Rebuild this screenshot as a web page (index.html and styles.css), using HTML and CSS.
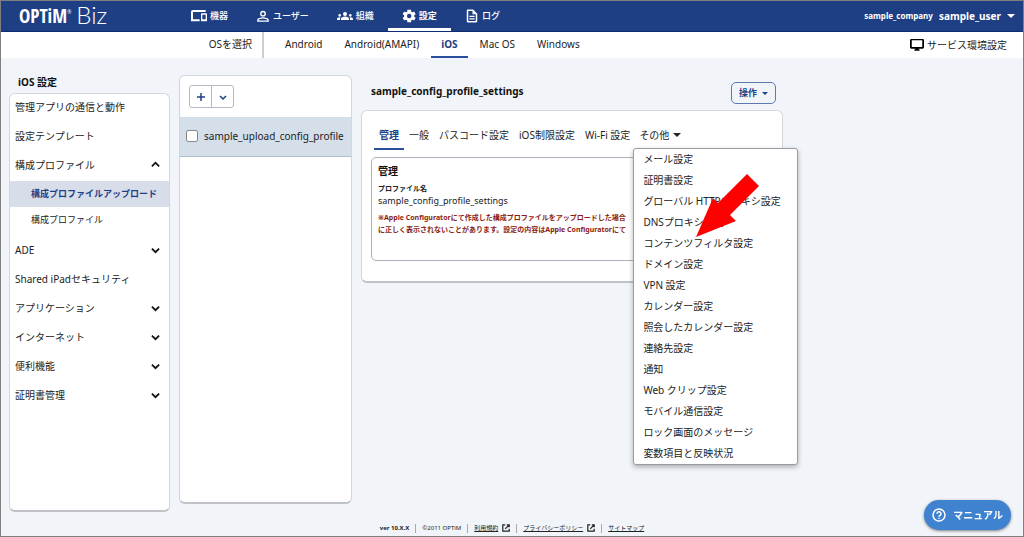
FILE: index.html
```html
<!DOCTYPE html>
<html lang="ja">

<head>
    <meta charset="UTF-8">
    <meta name="viewport" content="width=device-width, initial-scale=1.0">
    <title>OPTiM Biz</title>
    <link rel="stylesheet" href="styles.css">
</head>

<body>
    <header class="header">
        <a class="logo" href="#"><span class="logo-optim">OPTiM</span><span class="logo-mark">®</span><span class="logo-biz">Biz</span></a>
        <nav class="nav">
            <a class="nav-item" href="#">
                <svg class="icon-wide" viewBox="0 0 24 24"><path d="M3 6h19V3H3c-1.700 0-3 1.300-3 3v11H0v3h13v-3H3V6zm20 2h-7c-.6 0-1 .4-1 1v10c0 .6.400 1 1 1h7c.6 0 1-.4 1-1V9c0-.6-.4-1-1-1zm-1 9h-5v-7h5v7z"/></svg>
                機器
            </a>
            <a class="nav-item" href="#">
                <svg class="icon" viewBox="0 0 24 24"><path d="M12 3a5 5 0 1 0 0 10 5 5 0 0 0 0-10zm0 2.400a2.600 2.600 0 1 1 0 5.200 2.600 2.600 0 0 1 0-5.200zM12 14c-3.300 0-10 1.500-10 5v3h20v-3c0-3.500-6.700-5-10-5zm7.600 5.700H4.400V19c0-1.100 4-2.600 7.600-2.600s7.600 1.500 7.600 2.600z"/></svg>
                ユーザー
            </a>
            <a class="nav-item" href="#">
                <svg class="icon-wide" viewBox="0 0 24 24"><path d="M12 12.800c1.600 0 3.100.4 4.200.9 1.100.5 1.800 1.600 1.800 2.700V18H6v-1.600c0-1.200.7-2.200 1.800-2.700 1.200-.5 2.600-.9 4.200-.9zM4 13a2 2 0 1 0 0-4 2 2 0 0 0 0 4zm1.100 1.100A7 7 0 0 0 1.200 14.600 2 2 0 0 0 0 16.400V18h4.500v-1.600c0-.8.2-1.600.6-2.300zM20 13a2 2 0 1 0 0-4 2 2 0 0 0 0 4zm4 3.400a2 2 0 0 0-1.200-1.800 7 7 0 0 0-3.900-.5c.4.700.6 1.500.6 2.300V18H24zM12 6a3 3 0 1 1 0 6 3 3 0 0 1 0-6z"/></svg>
                組織
            </a>
            <a class="nav-item nav-active" href="#">
                <svg class="icon" viewBox="0 0 24 24"><path d="M21 13.100c.1-.7.100-1.500 0-2.200l2.200-1.700c.2-.2.300-.4.100-.7l-2.200-3.700c-.1-.2-.4-.3-.6-.2l-2.700 1a8 8 0 0 0-1.900-1.100L15.500 1.700c0-.3-.2-.4-.5-.4H9.700c-.3 0-.5.100-.5.400l-.4 2.800A8 8 0 0 0 6.900 5.600l-2.700-1c-.3-.1-.5 0-.6.200L1.200 8.500c-.1.300 0 .5.200.7l2.200 1.700c-.1.700-.1 1.500 0 2.200l-2.200 1.700c-.2.200-.3.400-.2.700l2.400 3.700c.1.200.3.300.6.200l2.700-1c.6.400 1.200.8 1.900 1.100l.4 2.800c0 .3.200.4.500.4H15c.3 0 .5-.1.500-.4l.4-2.800c.7-.3 1.300-.7 1.900-1.100l2.700 1c.2.100.5 0 .6-.2l2.200-3.700c.2-.3.100-.5-.1-.7zM12.300 15.800a3.800 3.800 0 1 1 0-7.600 3.800 3.800 0 0 1 0 7.600z"/></svg>
                設定
            </a>
            <a class="nav-item" href="#">
                <svg class="icon" viewBox="0 0 24 24"><path d="M5 1c-1.200 0-2 .9-2 2v18c0 1.100.9 2 2 2h14c1.100 0 2-.9 2-2V8l-7-7zm.6 2.500h7.200V9h5.600v11.500H5.600zM7.500 11.500v2.200h9v-2.200zm0 4.500v2.200h9V16z"/></svg>
                ログ
            </a>
        </nav>
        <button class="account" type="button">
            <span class="company">sample_company</span>
            <span>sample_user</span>
            <span class="caret"></span>
        </button>
    </header>

    <div class="subnav">
        <span class="os-label">OSを選択</span>
        <nav class="os-list">
            <a href="#">Android</a>
            <a href="#">Android(AMAPI)</a>
            <a class="os-active" href="#">iOS</a>
            <a href="#">Mac OS</a>
            <a href="#">Windows</a>
        </nav>
        <a class="service" href="#">
            <svg viewBox="0 0 16 14"><path d="M1.500 0h13A1.500 1.500 0 0 1 16 1.500v8a1.500 1.500 0 0 1-1.500 1.500H10v1h1v1.500H5V12h1v-1H1.500A1.500 1.500 0 0 1 0 9.500v-8A1.500 1.500 0 0 1 1.500 0zM2 1.500V9h12V1.500z"/></svg>
            サービス環境設定
        </a>
    </div>

    <main class="main">
        <section class="side">
            <h1 class="side-title">iOS 設定</h1>
            <ul class="side-menu card">
                <li><a href="#">管理アプリの通信と動作</a></li>
                <li><a href="#">設定テンプレート</a></li>
                <li>
                    <a href="#">構成プロファイル<svg class="chevron" viewBox="0 0 10 10"><path d="M1 7l4-4 4 4"/></svg></a>
                    <ul class="side-sub">
                        <li><a class="sub-active" href="#">構成プロファイルアップロード</a></li>
                        <li><a href="#">構成プロファイル</a></li>
                    </ul>
                </li>
                <li><a href="#">ADE<svg class="chevron" viewBox="0 0 10 10"><path d="M1 4l4 4 4-4"/></svg></a></li>
                <li><a href="#">Shared iPadセキュリティ</a></li>
                <li><a href="#">アプリケーション<svg class="chevron" viewBox="0 0 10 10"><path d="M1 4l4 4 4-4"/></svg></a></li>
                <li><a href="#">インターネット<svg class="chevron" viewBox="0 0 10 10"><path d="M1 4l4 4 4-4"/></svg></a></li>
                <li><a href="#">便利機能<svg class="chevron" viewBox="0 0 10 10"><path d="M1 4l4 4 4-4"/></svg></a></li>
                <li><a href="#">証明書管理<svg class="chevron" viewBox="0 0 10 10"><path d="M1 4l4 4 4-4"/></svg></a></li>
            </ul>
        </section>

        <section class="profiles card">
            <div class="tools">
                <button type="button" aria-label="追加"><svg viewBox="0 0 10 10"><path d="M5 1v8M1 5h8"/></svg></button>
                <button type="button" aria-label="メニュー"><svg viewBox="0 0 10 10"><path d="M2 4l3 3 3-3"/></svg></button>
            </div>
            <label class="profile">
                <input type="checkbox">
                sample_upload_config_profile
            </label>
        </section>

        <section class="detail">
            <div class="detail-head">
                <h2>sample_config_profile_settings</h2>
                <button class="action" type="button">操作<span class="caret"></span></button>
            </div>
            <div class="detail-card card">
                <div class="tabs">
                    <a class="tab-active" href="#">管理</a>
                    <a href="#">一般</a>
                    <a href="#">パスコード設定</a>
                    <a href="#">iOS制限設定</a>
                    <a href="#">Wi-Fi 設定</a>
                    <div class="more">
                        <button type="button">その他<span class="caret"></span></button>
                        <ul class="more-menu">
                            <li><a href="#">メール設定</a></li>
                            <li><a href="#">証明書設定</a></li>
                            <li><a href="#">グローバル HTTPプロキシ設定</a></li>
                            <li><a href="#">DNSプロキシ設定</a></li>
                            <li><a href="#">コンテンツフィルタ設定</a></li>
                            <li><a href="#">ドメイン設定</a></li>
                            <li><a href="#">VPN 設定</a></li>
                            <li><a href="#">カレンダー設定</a></li>
                            <li><a href="#">照会したカレンダー設定</a></li>
                            <li><a href="#">連絡先設定</a></li>
                            <li><a href="#">通知</a></li>
                            <li><a href="#">Web クリップ設定</a></li>
                            <li><a href="#">モバイル通信設定</a></li>
                            <li><a href="#">ロック画面のメッセージ</a></li>
                            <li><a href="#">変数項目と反映状況</a></li>
                        </ul>
                        <svg class="pointer" viewBox="0 0 63 64"><path d="M0 64L17 25l5 5L51 1l12 12L34 42l6 6z"/></svg>
                    </div>
                </div>
                <div class="panel">
                    <h3>管理</h3>
                    <dl>
                        <dt>プロファイル名</dt>
                        <dd>sample_config_profile_settings</dd>
                    </dl>
                    <p class="note">※Apple Configuratorにて作成した構成プロファイルをアップロードした場合<br>に正しく表示されないことがあります。設定の内容はApple Configuratorにて</p>
                </div>
            </div>
        </section>
    </main>

    <footer class="footer">
        <span class="version">ver 10.X.X</span>
        <span>©2011 OPTiM</span>
        <span><a href="#">利用規約</a><svg viewBox="0 0 10 10"><path d="M4 1H1v8h8V6M6 1h3v3M9 1L4 6"/></svg></span>
        <span><a href="#">プライバシーポリシー</a><svg viewBox="0 0 10 10"><path d="M4 1H1v8h8V6M6 1h3v3M9 1L4 6"/></svg></span>
        <span><a href="#">サイトマップ</a></span>
    </footer>

    <a class="manual" href="#">
        <svg viewBox="0 0 14 14"><circle cx="7" cy="7" r="6"/><path d="M5 5.700a2 2 0 1 1 3 1.700c-.7.400-1 .7-1 1.400M7 9.800v1.200"/></svg>
        マニュアル
    </a>
</body>

</html>
```
FILE: styles.css
```css
* {
    box-sizing: border-box;
}

body {
    display: flex;
    flex-direction: column;
    min-height: 100vh;
    margin: 0;
    border: 1px solid #7f7f7f;
    background-color: #f1f5f9;
    color: #222;
    font-family: "Noto Sans", "Noto Sans CJK JP", sans-serif;
    font-size: 10px;
    line-height: 12px;
}

a {
    color: inherit;
    text-decoration: none;
}

button {
    padding: 0;
    border: 0;
    background: none;
    color: inherit;
    font: inherit;
    cursor: pointer;
}

ul,
dl,
dd,
p,
h1,
h2,
h3 {
    margin: 0;
    padding: 0;
    list-style: none;
}

.card {
    border: 1px solid #d3d7dc;
    border-bottom: 2px solid #bfc3c8;
    border-radius: 6px;
    background-color: #fff;
}

.caret {
    border: 4px solid transparent;
    border-top-color: currentColor;
    border-bottom: 0;
}

/* header */
.header {
    display: flex;
    height: 31px;
    padding: 0 8px 0 18px;
    border-bottom: 1px solid #0c2c74;
    background-color: #1f3f85;
    color: #fff;
}

.logo {
    display: flex;
    align-items: center;
    min-width: 158px;
}

.logo-optim {
    font-family: "Liberation Sans Narrow", "Open Sans Condensed", "DejaVu Sans Condensed", sans-serif;
    font-size: 19px;
    font-weight: 700;
}

.logo-mark {
    margin-bottom: 8px;
    font-size: 5px;
}

.logo-biz {
    margin: 0 0 2px 5px;
    font-family: Lato, sans-serif;
    font-size: 24px;
    font-weight: 300;
}

.nav {
    display: flex;
}

.nav-item {
    display: flex;
    align-items: center;
    gap: 3px;
    padding: 0 14px;
    border-bottom: 3px solid transparent;
    border-top: 3px solid transparent;
    font-size: 9px;
    font-weight: 500;
}

.nav-active {
    border-bottom-color: #fff;
    font-weight: 700;
}

.nav svg {
    fill: #fff;
}

.icon {
    width: 14px;
}

.icon-wide {
    width: 16px;
}

.account {
    display: flex;
    align-items: center;
    gap: 6px;
    margin-left: auto;
    font-weight: 700;
}

.company {
    font-size: 8px;
}

/* os selection */
.subnav {
    display: flex;
    height: 26px;
    padding-right: 16px;
    background-color: #fff;
}

.os-label {
    min-width: 263px;
    padding: 6px 10px 0 0;
    border-right: 2px solid #c9ced6;
    text-align: right;
}

.os-list {
    display: flex;
    gap: 2px;
    padding-left: 11px;
}

.os-list a {
    padding: 6px 10px 0;
    border-bottom: 2px solid transparent;
}

.os-list .os-active {
    border-bottom-color: #2a4f9c;
    color: #1f3f85;
    font-weight: 700;
}

.service {
    display: flex;
    align-items: center;
    gap: 3px;
    margin-left: auto;
}

.service svg {
    width: 14px;
}

/* columns */
.main {
    display: grid;
    flex: 1;
    grid-template-columns: 161fr 173fr 422fr 231fr;
    gap: 9px;
    padding: 17px 0 0 8px;
}

.side {
    display: flex;
    flex-direction: column;
}

.side-title {
    padding: 1px 9px 5px;
    color: #111;
    font-size: 10px;
}

.side-menu {
    display: flex;
    flex: 1;
    flex-direction: column;
    gap: 4px;
}

.side-menu a {
    display: flex;
    align-items: center;
    justify-content: space-between;
    height: 25px;
    padding: 0 9px 0 5px;
}

.chevron {
    width: 9px;
    fill: none;
    stroke: #111;
    stroke-width: 2;
}

.side-sub {
    margin-top: 4px;
    font-size: 9px;
}

.side-menu .side-sub a {
    height: 26px;
    padding-left: 21px;
}

.side-sub .sub-active {
    background-color: #d7deea;
    color: #1f3f85;
    font-weight: 700;
}

/* profile list */
.profiles {
    margin-bottom: 8px;
}

.tools {
    display: flex;
    width: 45px;
    margin: 9px 0 9px 9px;
    border: 1px solid #b4bac4;
    border-radius: 3px;
}

.tools button {
    display: flex;
    align-items: center;
    justify-content: center;
    flex: 1;
    height: 21px;
}

.tools button + button {
    border-left: 1px solid #b4bac4;
}

.tools svg {
    width: 10px;
    fill: none;
    stroke: #1f3f85;
    stroke-width: 1.500;
}

.profile {
    display: flex;
    align-items: center;
    gap: 6px;
    height: 40px;
    padding: 0 0 2px 6px;
    border-bottom: 1px solid #aebccc;
    background-color: #d5dfea;
}

.profile input {
    appearance: none;
    width: 12px;
    height: 12px;
    margin: 0;
    border: 1px solid #888;
    border-radius: 2px;
    background-color: #fff;
}

/* profile detail */
.detail-head {
    display: flex;
    align-items: flex-start;
    justify-content: space-between;
    padding: 7px 7px 6px 10px;
}

.detail-head h2 {
    padding-top: 3px;
    color: #111;
    font-size: 10px;
}

.action {
    display: flex;
    align-items: center;
    gap: 5px;
    height: 22px;
    padding: 0 7px;
    border: 1px solid #5d78b0;
    border-radius: 5px;
    color: #1f3f85;
    font-size: 9px;
    font-weight: 700;
}

.action .caret {
    border-width: 3px 3px 0;
}

.detail-card {
    padding: 14px 8px 20px 9px;
}

.tabs {
    display: flex;
    padding-left: 3px;
}

.tabs > a,
.more button {
    height: 25px;
    padding: 4px 5px 0;
    border-bottom: 2px solid transparent;
    white-space: nowrap;
}

.tabs .tab-active {
    border-bottom-color: #2a4f9c;
    color: #1f3f85;
    font-weight: 700;
}

.more {
    position: relative;
}

.more button {
    display: flex;
    align-items: center;
    gap: 4px;
    padding: 0 4px 3px;
}

.more-menu {
    position: absolute;
    top: 23px;
    left: -2px;
    width: 165px;
    border: 1px solid #999da3;
    border-radius: 3px;
    background-color: #fff;
    box-shadow: 0 2px 5px rgba(0, 0, 0, 0.3);
}

.more-menu a {
    display: block;
    padding-left: 9px;
    line-height: 21px;
}

.pointer {
    position: absolute;
    top: 48px;
    left: 61px;
    width: 63px;
    fill: #f00;
}

.panel {
    height: 104px;
    margin-top: 7px;
    padding: 7px 6px;
    border: 1px solid #aab0bb;
    border-radius: 5px;
}

.panel h3 {
    color: #111;
    font-size: 10px;
}

.panel dt {
    margin-top: 6px;
    font-size: 7px;
    font-weight: 700;
}

.panel dd {
    font-size: 9px;
}

.note {
    margin-top: 5px;
    color: #8c1c13;
    font-size: 7px;
    font-weight: 700;
    white-space: nowrap;
}

/* footer */
.footer {
    display: flex;
    align-items: center;
    justify-content: center;
    height: 24px;
    padding-top: 8px;
    font-size: 6px;
    line-height: 9px;
}

.footer > span {
    display: flex;
    align-items: center;
    gap: 4px;
    padding: 0 6px;
}

.footer > span + span {
    border-left: 1px solid #aaa;
}

.footer .version {
    font-weight: 700;
}

.footer a {
    text-decoration: underline;
}

.footer svg {
    width: 8px;
    fill: none;
    stroke: #222;
    stroke-width: 1.500;
}

.manual {
    position: fixed;
    right: 13px;
    bottom: 7px;
    display: flex;
    align-items: center;
    gap: 7px;
    height: 30px;
    padding: 0 8px;
    border-radius: 15px;
    background-color: #3f82d0;
    box-shadow: 0 1px 3px rgba(0, 0, 0, 0.5);
    color: #fff;
    font-weight: 700;
}

.manual svg {
    width: 14px;
    fill: none;
    stroke: #fff;
    stroke-width: 1.500;
}
```
